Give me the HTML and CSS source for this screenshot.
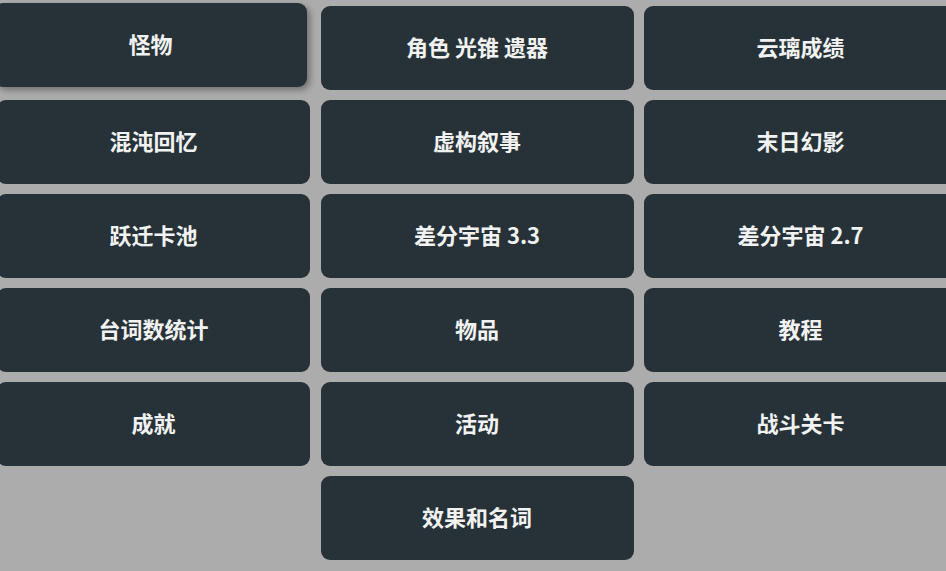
FILE: index.html
```html
<!DOCTYPE html>
<html lang="zh">
<head>
<meta charset="utf-8">
<title>菜单</title>
<link rel="stylesheet" href="styles.css">
</head>
<body>
<div class="menu">
  <a class="tile tile-hover">怪物</a>
  <a class="tile">角色 光锥 遗器</a>
  <a class="tile">云璃成绩</a>
  <a class="tile">混沌回忆</a>
  <a class="tile">虚构叙事</a>
  <a class="tile">末日幻影</a>
  <a class="tile">跃迁卡池</a>
  <a class="tile">差分宇宙 3.3</a>
  <a class="tile">差分宇宙 2.7</a>
  <a class="tile">台词数统计</a>
  <a class="tile">物品</a>
  <a class="tile">教程</a>
  <a class="tile">成就</a>
  <a class="tile">活动</a>
  <a class="tile">战斗关卡</a>
  <a class="tile tile-center">效果和名词</a>
</div>
</body>
</html>
```

FILE: styles.css
```css
html, body {
  margin: 0;
  padding: 0;
  background: #acacac;
  overflow: hidden;
}
body {
  width: 946px;
  height: 571px;
}
.menu {
  display: grid;
  grid-template-columns: repeat(3, 313px);
  grid-auto-rows: 84px;
  column-gap: 10.5px;
  row-gap: 10px;
  margin-left: -3px;
  padding-top: 6px;
  width: 961px;
}
.tile {
  display: flex;
  align-items: center;
  justify-content: center;
  padding-bottom: 3px;
  box-sizing: border-box;
  background: #263238;
  color: #f2f2f2;
  border-radius: 9px;
  font-family: "Noto Sans CJK SC", "Noto Sans", sans-serif;
  font-weight: 700;
  font-size: 22px;
  line-height: 1.2;
  text-decoration: none;
  cursor: pointer;
}
.tile-hover {
  transform: translate(-3px, -3px);
  box-shadow: 3px 3px 6px rgba(0, 0, 0, 0.35);
}
.tile-center {
  grid-column: 2;
}
```
